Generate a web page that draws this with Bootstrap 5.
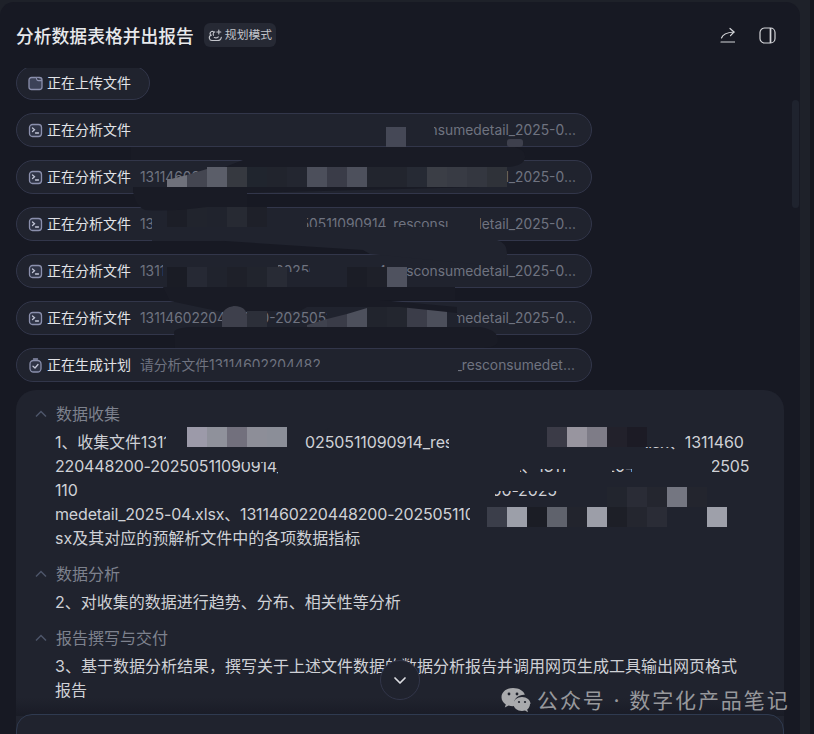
<!DOCTYPE html>
<html lang="en">
<head>
  <meta charset="UTF-8" />
  <title>分析数据表格并出报告</title>
  <link href="https://cdn.jsdelivr.net/npm/bootstrap@5.3.0/dist/css/bootstrap.min.css" rel="stylesheet" />
  <style>
    html, body { height: 100%; }
    body {
      background-color: #14161e;
      font-family: "Inter", "Noto Sans CJK SC", sans-serif;
      overflow: hidden;
    }
    .app-frame {
      width: 814px;
      height: 734px;
      padding-top: 2px;
      background: linear-gradient(to right, #1e2129 0, #1e2129 810px, #14161e 810px);
      position: relative;
      overflow: hidden;
    }
    .main-panel {
      width: 800px;
      height: 732px;
      background-color: #171923;
      border-top-right-radius: 14px;
      border-top-left-radius: 14px;
      padding: 21px 16px 0 16px;
      position: relative;
    }
    .panel-title {
      font-size: 17.8px;
      font-weight: 500;
      color: #e8e9ec;
      line-height: 24px;
      height: 24px;
      padding-top: 2px;
    }
    .mode-tag {
      height: 24px;
      margin-left: 10px;
      background-color: #262934;
      border-radius: 6px;
      font-size: 11.8px;
      color: #c3c5cb;
      padding: 1px 4px 0 4px;
      gap: 2px;
    }
    .mode-tag svg { flex: none; }
    .head-actions { padding-right: 8px; gap: 24px; }
    .step-list { margin-top: 21px; gap: 13px; overflow: hidden; }
    .step-pill {
      height: 34px;
      flex: none;
      background-color: #20232e;
      border: 1px solid #32364a;
      border-radius: 17px;
      padding: 0 11px 0 11px;
      font-size: 14px;
      width: 576px;
      white-space: nowrap;
      overflow: hidden;
    }
    .step-pill svg { flex: none; }
    .step-pill.is-short { width: 134px; margin-top: -2px; }
    .step-name { color: #e2e3e7; flex: none; margin-left: 4px; padding-bottom: 2px; }
    .step-sub {
      color: #6f7380;
      font-size: 13.8px;
      margin-left: 9px;
      overflow: hidden;
      text-overflow: ellipsis;
    }
    .plan-card {
      width: 768px;
      height: 400px;
      margin-top: 8px;
      padding: 12px 0 0 19px;
      background-color: #20232e;
      border-radius: 20px;
    }
    .plan-head {
      font-size: 16px;
      line-height: 24px;
      color: #7d818d;
      margin-bottom: 4px;
    }
    .plan-head svg { margin-right: 9px; flex: none; }
    .plan-body {
      font-size: 16px;
      line-height: 24px;
      color: #cfd1d6;
      padding-left: 20px;
      margin-bottom: 12px;
      white-space: nowrap;
    }
    .file-run { letter-spacing: -.17px; }
    .file-run-first { letter-spacing: -.12px; }
    .bottom-fade {
      position: absolute;
      left: 0;
      top: 696px;
      width: 800px;
      height: 18px;
      background: linear-gradient(to bottom, rgba(23, 25, 35, 0), rgba(23, 25, 35, .75));
    }
    .down-btn {
      position: absolute;
      left: 380px;
      top: 660px;
      width: 40px;
      height: 40px;
      border-radius: 50%;
      border: 1px solid #32364a;
      background-color: #20232e;
    }
    .composer {
      position: absolute;
      left: 16px;
      top: 712px;
      width: 768px;
      height: 60px;
      background-color: #20232e;
      border: 1px solid #2f3a50;
      border-radius: 16px;
    }
    .scroll-thumb {
      position: absolute;
      left: 792px;
      top: 98px;
      width: 7px;
      height: 108px;
      border-radius: 4px;
      background-color: #1f232e;
    }
    .watermark {
      position: absolute;
      left: 537px;
      top: 687px;
      font-size: 21px;
      line-height: 28px;
      letter-spacing: 1.9px;
      color: #97989c;
      white-space: nowrap;
    }
    .redact-layer { position: absolute; left: 0; top: 0; }
  </style>
</head>
<body>
  <div class="app-frame">
    <div class="main-panel">
      <div class="d-flex align-items-center">
        <span class="panel-title">分析数据表格并出报告</span>
        <span class="mode-tag d-inline-flex align-items-center">
          <svg width="15" height="15" viewBox="0 0 15 15" fill="none" stroke="#c3c5cb" stroke-width="1.1" stroke-linecap="round"><path d="M3.200 7.200a2 2 0 0 1 2-3.600M5.500 7.300c-.8-1.500-.1-3.200 1.300-3.400"/><path d="M3 7.300A2.700 2.700 0 0 0 4.200 12.500h5.300c1.900 0 3.500-1.200 3.800-3.200"/><path d="M6.300 9.600c1.500.5 3 .2 4-.8"/><path d="M10.800 2v4M8.800 4h4"/></svg>
          规划模式
        </span>
        <div class="head-actions ms-auto d-flex align-items-center">
          <svg width="16" height="16" viewBox="0 0 16 16" fill="none" stroke="#d4d5d9" stroke-width="1.200" stroke-linecap="round" stroke-linejoin="round"><path d="M2 15h13.500"/><path d="M2.500 11C3.500 7.500 7 5.500 15 5"/><path d="M11 1.500 15 5 11.500 8.700"/></svg>
          <svg width="17" height="17" viewBox="0 0 17 17" fill="none" stroke="#d4d5d9" stroke-width="1.200"><rect x="1" y="1" width="15" height="15" rx="4.500"/><path d="M11.500 1v15" stroke-width="1.700"/></svg>
        </div>
      </div>

      <div class="step-list d-flex flex-column">
        <div class="step-pill is-short d-flex align-items-center">
          <svg width="15" height="15" viewBox="0 0 15 15" fill="#3c4257" stroke="#8b90ad" stroke-width="1.300"><path d="M3.500 1.500h8a2.500 2.500 0 0 1 2.500 2.500v7a2.500 2.500 0 0 1-2.500 2.500h-8A2.500 2.500 0 0 1 1 11V4a2.500 2.500 0 0 1 2.500-2.500z"/><path d="M8.500 1.500c0 2 .5 3 2 3H14" fill="#20232e"/></svg>
          <span class="step-name">正在上传文件</span>
        </div>
        <div class="step-pill d-flex align-items-center">
          <svg width="15" height="15" viewBox="0 0 15 15" fill="#2f3446" stroke="#8b90ad" stroke-width="1.300" stroke-linecap="round"><rect x="1.500" y="1.500" width="12" height="12" rx="3"/><path d="M4.500 5 6.500 6.800 4.500 8.500M7.500 10h3" fill="none" stroke="#c2c5d6"/></svg>
          <span class="step-name">正在分析文件</span>
          <span class="step-sub">1311460220448200-20250511090914_resconsumedetail_2025-04.xlsx</span>
        </div>
        <div class="step-pill d-flex align-items-center">
          <svg width="15" height="15" viewBox="0 0 15 15" fill="#2f3446" stroke="#8b90ad" stroke-width="1.300" stroke-linecap="round"><rect x="1.500" y="1.500" width="12" height="12" rx="3"/><path d="M4.500 5 6.500 6.800 4.500 8.500M7.500 10h3" fill="none" stroke="#c2c5d6"/></svg>
          <span class="step-name">正在分析文件</span>
          <span class="step-sub">1311460220448200-20250511090914_resconsumedetail_2025-04.xlsx</span>
        </div>
        <div class="step-pill d-flex align-items-center">
          <svg width="15" height="15" viewBox="0 0 15 15" fill="#2f3446" stroke="#8b90ad" stroke-width="1.300" stroke-linecap="round"><rect x="1.500" y="1.500" width="12" height="12" rx="3"/><path d="M4.500 5 6.500 6.800 4.500 8.500M7.500 10h3" fill="none" stroke="#c2c5d6"/></svg>
          <span class="step-name">正在分析文件</span>
          <span class="step-sub">1311460220448200-20250511090914_resconsumedetail_2025-04.xlsx</span>
        </div>
        <div class="step-pill d-flex align-items-center">
          <svg width="15" height="15" viewBox="0 0 15 15" fill="#2f3446" stroke="#8b90ad" stroke-width="1.300" stroke-linecap="round"><rect x="1.500" y="1.500" width="12" height="12" rx="3"/><path d="M4.500 5 6.500 6.800 4.500 8.500M7.500 10h3" fill="none" stroke="#c2c5d6"/></svg>
          <span class="step-name">正在分析文件</span>
          <span class="step-sub">1311460220448200-20250511090914_resconsumedetail_2025-04.xlsx</span>
        </div>
        <div class="step-pill d-flex align-items-center">
          <svg width="15" height="15" viewBox="0 0 15 15" fill="#2f3446" stroke="#8b90ad" stroke-width="1.300" stroke-linecap="round"><rect x="1.500" y="1.500" width="12" height="12" rx="3"/><path d="M4.500 5 6.500 6.800 4.500 8.500M7.500 10h3" fill="none" stroke="#c2c5d6"/></svg>
          <span class="step-name">正在分析文件</span>
          <span class="step-sub">1311460220448200-20250511090914_resconsumedetail_2025-04.xlsx</span>
        </div>
        <div class="step-pill d-flex align-items-center">
          <svg width="15" height="15" viewBox="0 0 15 15" fill="#2f3446" stroke="#8b90ad" stroke-width="1.300" stroke-linecap="round" stroke-linejoin="round"><rect x="2" y="2.500" width="11" height="11.500" rx="3.500"/><path d="M5.500 1h4"/><path d="M5 8.200 7 10 10 6.500" fill="none" stroke="#c2c5d6"/></svg>
          <span class="step-name">正在生成计划</span>
          <span class="step-sub">请分析文件1311460220448200-20250511090914_resconsumedetail_2025-04.xlsx</span>
        </div>
      </div>

      <div class="plan-card">
        <div class="plan-head d-flex align-items-center">
          <svg width="12" height="8" viewBox="0 0 12 8" fill="none" stroke="#4d5569" stroke-width="1.500"><path d="M1 6.500 6 1.500l5 5"/></svg>
          <span>数据收集</span>
        </div>
        <div class="plan-body">
          <span class="file-run-first">1、收集文件1311460220448200-20250511090914_resconsumedetail_2025-04.xlsx、1311460</span><br>
          <span class="file-run">220448200-20250511090914_resconsumedetail_2025-04.xlsx、1311460220448200-202505<br>
          110914_resconsumedetail_2025-04.xlsx、1311460220448200-20250511090914_resconsu<br>
          medetail_2025-04.xlsx、1311460220448200-20250511090914_resconsumedetail_2025-04.xl</span><br>
          sx及其对应的预解析文件中的各项数据指标
        </div>
        <div class="plan-head d-flex align-items-center">
          <svg width="12" height="8" viewBox="0 0 12 8" fill="none" stroke="#4d5569" stroke-width="1.500"><path d="M1 6.500 6 1.500l5 5"/></svg>
          <span>数据分析</span>
        </div>
        <div class="plan-body">2、对收集的数据进行趋势、分布、相关性等分析</div>
        <div class="plan-head d-flex align-items-center">
          <svg width="12" height="8" viewBox="0 0 12 8" fill="none" stroke="#4d5569" stroke-width="1.500"><path d="M1 6.500 6 1.500l5 5"/></svg>
          <span>报告撰写与交付</span>
        </div>
        <div class="plan-body">
          3、基于数据分析结果，撰写关于上述文件数据的数据分析报告并调用网页生成工具输出网页格式<br>
          报告
        </div>
      </div>

      <div class="scroll-thumb"></div>
      <div class="bottom-fade"></div>
      <div class="composer"></div>
    </div>

    <!-- mosaic and brush strokes sitting over the file names -->
    <svg class="redact-layer" width="814" height="734" viewBox="0 0 814 734" id="redact"></svg>

    <div class="down-btn d-flex align-items-center justify-content-center">
      <svg width="14" height="9" viewBox="0 0 14 9" fill="none" stroke="#dcdde1" stroke-width="1.700" stroke-linecap="round" stroke-linejoin="round"><path d="M2 2l5 5 5-5"/></svg>
    </div>

    <svg class="redact-layer" width="814" height="734" viewBox="0 0 814 734">
      <path d="M513 688c-6.500 0-11.500 4-11.500 9.200 0 3 1.700 5.500 4.300 7.200l-1 3.200 3.800-2c1.200.4 2.700.6 4.400.6.500 0 1 0 1.500-.1-.3-1-.5-1.800-.5-2.800 0-4.800 4.500-8.500 10-8.500h.8C523.800 690.800 519 688 513 688z" fill="#a9aaad"/>
      <path d="M530.500 704c0-4-3.800-7-8.500-7s-8.500 3-8.500 7 3.800 7 8.500 7c1 0 2-.1 3-.4l3 1.600-.8-2.700c1.700-1.300 2.800-3.300 2.800-5.500z" fill="#a9aaad"/>
      <g fill="#1f222c"><circle cx="509" cy="694" r="1.400"/><circle cx="517" cy="694" r="1.400"/><circle cx="519" cy="702" r="1.100"/><circle cx="525" cy="702" r="1.100"/></g>
    </svg>
    <div class="watermark">公众号 · 数字化产品笔记</div>
  </div>

  <script>
    // mosaic blocks from the screenshot: [x, y, colour], all 20x20 cells
    const row = (y, list) => list.map(c => [c[0], y, c[1]]);
    const cells = [
      [386, 127, '#454856'],
      ...row(167, [[207,'#5b5e69'],[227,'#363940'],[247,'#20252e'],[267,'#21242d'],[287,'#232630'],[307,'#4c4f5b'],[327,'#3a3c48'],[347,'#4d505c'],[367,'#22252e'],[387,'#22252e'],[407,'#262a34'],[427,'#3b3e46'],[447,'#383b44'],[467,'#343740'],[487,'#2f3239']]),
      ...row(207, [[167,'#1c1e27'],[187,'#21242d'],[207,'#20232d'],[227,'#272a33'],[247,'#1e2029']]),
      ...row(267, [[167,'#1a1c25'],[187,'#262934'],[207,'#20232d'],[227,'#1e2029'],[247,'#21242d'],[267,'#282b35'],[347,'#1b1d26'],[367,'#1e2029'],[387,'#4f525f']]),
      ...row(307, [[247,'#2c2f39'],[367,'#21242d'],[387,'#23262f'],[407,'#3b3d49'],[427,'#4c4f5b']]),
      ...row(427, [[187,'#9c9aa9'],[207,'#8f919b'],[227,'#72707d'],[247,'#8d8e98'],[267,'#8b8e98'],[547,'#3b3b47'],[567,'#98959f'],[587,'#7e7c87'],[607,'#22212b'],[627,'#1c1b25']]),
      ...row(487, [[607,'#22252e'],[627,'#2a2c36'],[647,'#24262f'],[667,'#747681'],[687,'#23252e']]),
      ...row(507, [[487,'#3b3e4a'],[507,'#9c9fa9'],[527,'#1b1d25'],[547,'#5f626c'],[567,'#22242d'],[587,'#9c9ea8'],[607,'#1d1f27'],[627,'#24262f'],[647,'#2a2c36'],[707,'#9ea0aa']])
    ];
    const card = '#20232e', dark = '#191b25';
    const masks = [
      // pill row 1
      'M131 114H434V146H131Z',
      // pill row 3
      'M152 208H307V241H152Z',
      'M300 227H480V241H300Z',
      'M450 208H480V230H450Z',
      'M210 240H497Q507 243 507 253Q507 264 495 266L370 254L363 250Z',
      // pill row 4
      'M163 255H278V287H163Z',
      'M278 272H378V287H278Z',
      'M310 255H378V272H310Z',
      // pill row 5
      'M327 306H457V327H327Z',
      // pill row 6
      'M215 367H320V381H215Z',
      'M320 349H458V381H320Z',
      // plan card, line 1
      'M166 428H305V453H166Z',
      'M287 428H330L305 438H287Z',
      'M449 428H647V447H449Z',
      'M449 447H644V453H449Z',
      'M647 428H680V447H647Z',
      // line 2
      'M240 453H520V462H240Z',
      'M278 462H520V478H278Z',
      'M520 453H712V469H520Z',
      'M567 469H612V478H567Z',
      'M632 469H712V478H632Z',
      // line 3
      'M78 478H495V502H78Z',
      'M495 478H557V491H495Z',
      'M557 478H770V502H557Z',
      // line 4
      'M470 503H770V526H470Z'
    ];
    let svg = '';
    masks.forEach(m => { svg += `<path d="${m}" fill="${card}"/>`; });
    cells.forEach(c => { svg += `<rect x="${c[0]}" y="${c[1]}" width="20" height="20" fill="${c[2]}"/>`; });
    // partly wiped cells
    svg += '<path d="M167 187V180L187 175V187Z" fill="#6f717b"/><path d="M187 187V175L207 169V187Z" fill="#444651"/>';
    svg += '<path d="M222 327V316Q224 306 234 306Q246 306 247 316V327Z" fill="#3e404c"/>';
    svg += '<path d="M307 327V325L327 319V327Z" fill="#3f424e"/><path d="M327 327V319L347 314V327Z" fill="#3a3c48"/><path d="M347 327V314L367 308V327Z" fill="#4d505c"/>';
    svg += '<rect x="507" y="139" width="16" height="8" rx="3" fill="#3e404d"/>';
    // dark strokes go over the mosaic
    svg += `<path d="M131 147H515Q526 150 525 158Q523 167 505 167H225L243 160H131Z" fill="${dark}"/>`;
    svg += `<path d="M147 187H480L247 193H133V188Z" fill="${dark}"/>`;
    svg += `<path d="M133 187H247V207H207Q170 212 145 210Q133 205 133 187Z" fill="${dark}"/>`;
    svg += `<path d="M163 287H455V300H380L457 307V313L400 307H307L300 311H247Q235 300 222 312L170 301Z" fill="${dark}"/>`;
    svg += `<path d="M174 332Q176 327 195 327H480Q498 330 498 340Q498 348 480 348H175Z" fill="${dark}"/>`;
    document.getElementById('redact').innerHTML = svg;
  </script>
  <script src="https://cdn.jsdelivr.net/npm/bootstrap@5.3.0/dist/js/bootstrap.bundle.min.js"></script>
</body>
</html>
